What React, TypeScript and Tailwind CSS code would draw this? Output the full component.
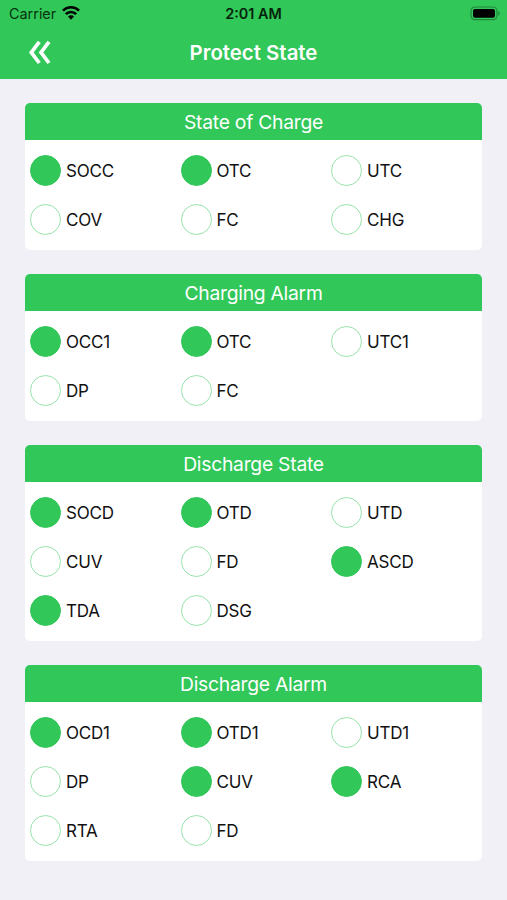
type Item = { label: string; on?: boolean };

const sections: { title: string; items: Item[] }[] = [
  {
    title: "State of Charge",
    items: [
      { label: "SOCC", on: true },
      { label: "OTC", on: true },
      { label: "UTC" },
      { label: "COV" },
      { label: "FC" },
      { label: "CHG" },
    ],
  },
  {
    title: "Charging Alarm",
    items: [
      { label: "OCC1", on: true },
      { label: "OTC", on: true },
      { label: "UTC1" },
      { label: "DP" },
      { label: "FC" },
    ],
  },
  {
    title: "Discharge State",
    items: [
      { label: "SOCD", on: true },
      { label: "OTD", on: true },
      { label: "UTD" },
      { label: "CUV" },
      { label: "FD" },
      { label: "ASCD", on: true },
      { label: "TDA", on: true },
      { label: "DSG" },
    ],
  },
  {
    title: "Discharge Alarm",
    items: [
      { label: "OCD1", on: true },
      { label: "OTD1", on: true },
      { label: "UTD1" },
      { label: "DP" },
      { label: "CUV", on: true },
      { label: "RCA", on: true },
      { label: "RTA" },
      { label: "FD" },
    ],
  },
];

function StatusBar() {
  return (
    <div className="grid h-[27px] grid-cols-3 items-center px-[6px] text-[14.4px] text-[#07330f]">
      <div className="flex items-center gap-1.5 pl-[3px]">
        <span>Carrier</span>
        <svg width="18" height="14" viewBox="0 0 18 14" fill="none" stroke="#000" strokeWidth="2.6">
          <path d="M.9 4.6a11.5 11.5 0 0 1 16.2 0" />
          <path d="M3.8 8.1a7.4 7.4 0 0 1 10.4 0" />
          <path d="M9 13.7 6 10.5a4.2 4.2 0 0 1 6 0z" fill="#000" stroke="none" />
        </svg>
      </div>
      <span className="text-center font-semibold whitespace-nowrap text-[#04220a]">2:01 AM</span>
      <svg className="justify-self-end" width="31" height="15" viewBox="0 0 31 15">
        <rect x="1" y="1" width="26" height="12.6" rx="3.8" fill="none" stroke="#1f8a3d" strokeWidth="1.2" />
        <rect x="3" y="3" width="22" height="8.8" rx="2" fill="#000" />
        <path d="M28.3 5v4.8a2.7 2.7 0 0 0 0-4.8z" fill="#1f8a3d" />
      </svg>
    </div>
  );
}

export default function App() {
  return (
    <main className="min-h-screen bg-[#f1f0f6] font-['Inter','Liberation_Sans',sans-serif]">
      <header className="h-[79px] bg-[#32c759]">
        <StatusBar />
        <div className="grid h-[51px] grid-cols-3 items-center">
          <svg
            className="ml-[28px]"
            width="24"
            height="26"
            viewBox="0 0 24 26"
            fill="none"
            stroke="#fff"
            strokeWidth="3.7"
          >
            <path d="M11.3 1.8 3.3 12.4l8 10.6M21 1.8l-8 10.6 8 10.6" />
          </svg>
          <h1 className="pt-[2px] text-center text-[20.4px] font-semibold whitespace-nowrap text-white">Protect State</h1>
        </div>
      </header>

      <div className="flex flex-col gap-6 px-[25px] pt-6">
        {sections.map((section) => (
          <section key={section.title} className="overflow-hidden rounded-[5px] bg-white">
            <h2 className="flex h-[37px] items-center justify-center bg-[#32c759] pt-[2px] text-[19.3px] tracking-[-0.25px] text-white">
              {section.title}
            </h2>
            <div className="grid grid-cols-[150.5px_150.5px_1fr] gap-y-[18px] px-[5px] py-[15px]">
              {section.items.map((item) => (
                <div key={item.label} className="flex h-[31px] items-center gap-[5px]">
                  <span
                    className={`size-[31px] rounded-full border ${
                      item.on ? "border-[#32c759] bg-[#32c759]" : "border-[#98e3ac] bg-white"
                    }`}
                  />
                  <span className="pt-[2px] text-[17px] tracking-[-0.2px] text-[#111]">{item.label}</span>
                </div>
              ))}
            </div>
          </section>
        ))}
      </div>
    </main>
  );
}
